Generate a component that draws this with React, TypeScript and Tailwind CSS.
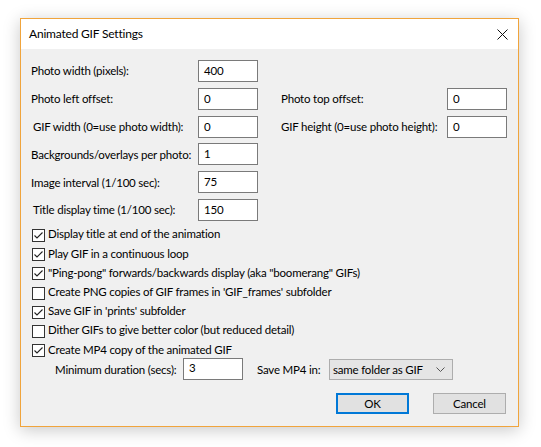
import React from "react";

const font = { fontFamily: 'Lato, "Noto Sans", Arial, sans-serif', letterSpacing: "-0.2px" };

function TextBox({ value, className = "" }: { value: string; className?: string }) {
  return (
    <div
      className={`h-[22px] w-[60px] shrink-0 border border-[#7a7a7a] bg-white pl-[5px] text-[11.5px] leading-[20px] text-black ${className}`}
    >
      {value}
    </div>
  );
}

function CheckRow({ label, checked }: { label: string; checked: boolean }) {
  return (
    <div className="flex h-[19.2px] items-center pl-[1px]">
      <div className="flex h-[13px] w-[13px] shrink-0 items-center justify-center border border-[#333333] bg-white">
        {checked && (
          <svg width="11" height="11" viewBox="0 0 11 11">
            <path d="M1.5 5.5 L4 8 L9.5 2.5" fill="none" stroke="#222" strokeWidth="1.1" />
          </svg>
        )}
      </div>
      <span className="mb-[3px] ml-[3px] whitespace-nowrap text-[11.5px] text-black">{label}</span>
    </div>
  );
}

function FieldRow({
  label,
  value,
  indent = false,
  right,
}: {
  label: string;
  value: string;
  indent?: boolean;
  right?: { label: string; value: string };
}) {
  return (
    <div className="flex h-[22px] items-center">
      <span className={`w-[167px] shrink-0 whitespace-nowrap text-[11.5px] ${indent ? "pl-[2px]" : ""}`}>{label}</span>
      <TextBox value={value} />
      {right && (
        <>
          <span className="ml-[23px] w-[166px] shrink-0 whitespace-nowrap text-[11.5px]">{right.label}</span>
          <TextBox value={right.value} />
        </>
      )}
    </div>
  );
}

export default function App() {
  return (
    <div className="h-[447px] w-[541px] bg-white pl-[20px] pt-[18px]" style={font}>
      <div className="flex h-[409px] w-[499px] flex-col border border-[#f0a43c] bg-[#f0f0f0] shadow-[0_3px_16px_rgba(0,0,0,0.22)]">
        {/* title bar */}
        <div className="flex h-[30px] shrink-0 items-center justify-between bg-white pl-[8px] pr-[10px]">
          <span className="text-[12px] text-black">Animated GIF Settings</span>
          <svg width="11" height="11" viewBox="0 0 11 11">
            <path d="M0.5 0.5 L10.5 10.5 M10.5 0.5 L0.5 10.5" stroke="#111" strokeWidth="1" />
          </svg>
        </div>

        <div className="flex flex-col pl-[10px] pt-[11px]">
          <div className="flex flex-col gap-[5.8px]">
            <FieldRow label="Photo width (pixels):" value="400" />
            <FieldRow
              label="Photo left offset:"
              value="0"
              right={{ label: "Photo top offset:", value: "0" }}
            />
            <FieldRow
              label="GIF width (0=use photo width):"
              value="0"
              indent
              right={{ label: "GIF height (0=use photo height):", value: "0" }}
            />
            <FieldRow label="Backgrounds/overlays per photo:" value="1" />
            <FieldRow label="Image interval (1/100 sec):" value="75" />
            <FieldRow label="Title display time (1/100 sec):" value="150" indent />
          </div>

          <div className="mt-[5px] flex flex-col">
            <CheckRow label="Display title at end of the animation" checked />
            <CheckRow label="Play GIF in a continuous loop" checked />
            <CheckRow label={'"Ping-pong" forwards/backwards display (aka "boomerang" GIFs)'} checked />
            <CheckRow label="Create PNG copies of GIF frames in 'GIF_frames' subfolder" checked={false} />
            <CheckRow label="Save GIF in 'prints' subfolder" checked />
            <CheckRow label="Dither GIFs to give better color (but reduced detail)" checked={false} />
            <CheckRow label="Create MP4 copy of the animated GIF" checked />
          </div>

          <div className="mt-[-2px] flex h-[22px] items-center pl-[24px] text-[11.5px]">
            <span className="w-[128px] shrink-0 whitespace-nowrap">Minimum duration (secs):</span>
            <div className="h-[22px] w-[60px] shrink-0 border border-[#7a7a7a] bg-white pl-[5px] leading-[17px]">
              3
            </div>
            <span className="ml-[14px] w-[72px] shrink-0 whitespace-nowrap">Save MP4 in:</span>
            <div className="flex h-[21px] w-[124px] shrink-0 items-center justify-between border border-[#adadad] bg-[#e5e5e5] pl-[3px] pr-[7px]">
              <span className="whitespace-nowrap">same folder as GIF</span>
              <svg width="9" height="5" viewBox="0 0 9 5">
                <path d="M0.5 0.5 L4.5 4.5 L8.5 0.5" fill="none" stroke="#555" strokeWidth="1" />
              </svg>
            </div>
          </div>

          <div className="mt-[13px] flex justify-end gap-[24px] pr-[12px] text-[11.5px]">
            <button className="h-[21px] w-[73px] border-2 border-[#0078d7] bg-[#e1e1e1] text-black">OK</button>
            <button className="h-[21px] w-[73px] border border-[#adadad] bg-[#e1e1e1] text-black">Cancel</button>
          </div>
        </div>
      </div>
    </div>
  );
}
